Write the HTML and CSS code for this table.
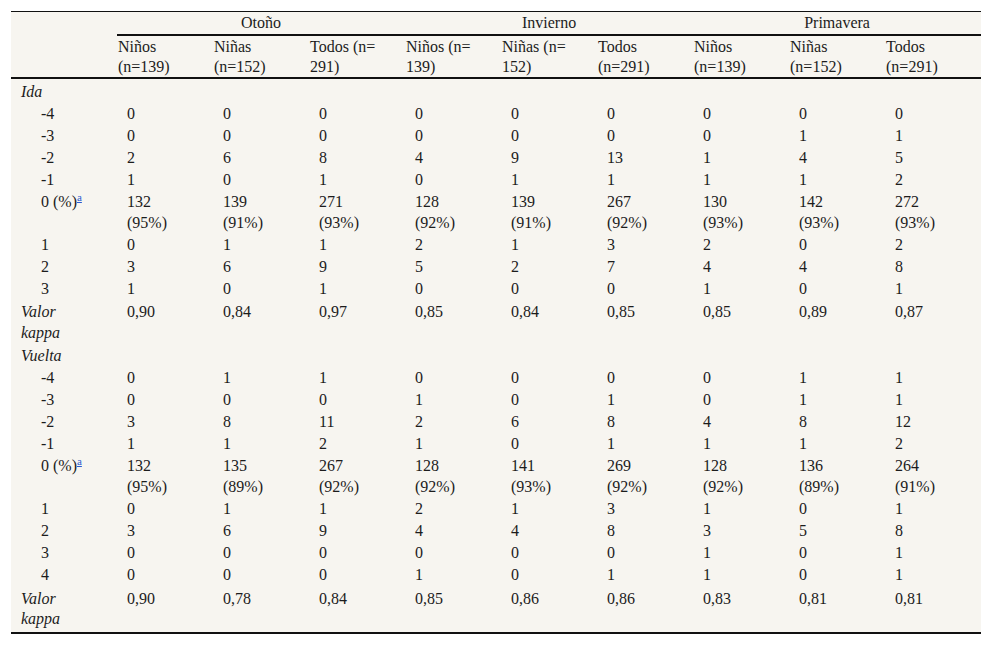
FILE: index.html
```html
<!DOCTYPE html>
<html lang="es">
<head>
<meta charset="utf-8">
<title>Tabla</title>
<link rel="stylesheet" href="styles.css">
</head>
<body>
<table class="tbl">
<colgroup>
<col class="c-label">
<col class="c-data"><col class="c-data"><col class="c-data">
<col class="c-data"><col class="c-data"><col class="c-data">
<col class="c-data"><col class="c-data"><col class="c-data">
</colgroup>
<thead>
<tr class="h1">
<th class="corner" rowspan="2"></th>
<th class="season" colspan="3">Otoño</th>
<th class="season" colspan="3">Invierno</th>
<th class="season" colspan="3">Primavera</th>
</tr>
<tr class="h2">
<th>Niños<br>(n=139)</th><th>Niñas<br>(n=152)</th><th>Todos (n=<br>291)</th>
<th>Niños (n=<br>139)</th><th>Niñas (n=<br>152)</th><th>Todos<br>(n=291)</th>
<th>Niños<br>(n=139)</th><th>Niñas<br>(n=152)</th><th>Todos<br>(n=291)</th>
</tr>
</thead>
<tbody>
<tr class="first"><td class="grp" colspan="10">Ida</td></tr>
<tr><td class="ind">-4</td><td>0</td><td>0</td><td>0</td><td>0</td><td>0</td><td>0</td><td>0</td><td>0</td><td>0</td></tr>
<tr><td class="ind">-3</td><td>0</td><td>0</td><td>0</td><td>0</td><td>0</td><td>0</td><td>0</td><td>1</td><td>1</td></tr>
<tr><td class="ind">-2</td><td>2</td><td>6</td><td>8</td><td>4</td><td>9</td><td>13</td><td>1</td><td>4</td><td>5</td></tr>
<tr><td class="ind">-1</td><td>1</td><td>0</td><td>1</td><td>0</td><td>1</td><td>1</td><td>1</td><td>1</td><td>2</td></tr>
<tr><td class="ind">0 (%)<sup class="fn"><a href="#a">a</a></sup></td><td>132<br>(95%)</td><td>139<br>(91%)</td><td>271<br>(93%)</td><td>128<br>(92%)</td><td>139<br>(91%)</td><td>267<br>(92%)</td><td>130<br>(93%)</td><td>142<br>(93%)</td><td>272<br>(93%)</td></tr>
<tr><td class="ind">1</td><td>0</td><td>1</td><td>1</td><td>2</td><td>1</td><td>3</td><td>2</td><td>0</td><td>2</td></tr>
<tr><td class="ind">2</td><td>3</td><td>6</td><td>9</td><td>5</td><td>2</td><td>7</td><td>4</td><td>4</td><td>8</td></tr>
<tr><td class="ind">3</td><td>1</td><td>0</td><td>1</td><td>0</td><td>0</td><td>0</td><td>1</td><td>0</td><td>1</td></tr>
<tr class="kappa"><td class="grp">Valor<br>kappa</td><td>0,90</td><td>0,84</td><td>0,97</td><td>0,85</td><td>0,84</td><td>0,85</td><td>0,85</td><td>0,89</td><td>0,87</td></tr>
<tr><td class="grp" colspan="10">Vuelta</td></tr>
<tr><td class="ind">-4</td><td>0</td><td>1</td><td>1</td><td>0</td><td>0</td><td>0</td><td>0</td><td>1</td><td>1</td></tr>
<tr><td class="ind">-3</td><td>0</td><td>0</td><td>0</td><td>1</td><td>0</td><td>1</td><td>0</td><td>1</td><td>1</td></tr>
<tr><td class="ind">-2</td><td>3</td><td>8</td><td>11</td><td>2</td><td>6</td><td>8</td><td>4</td><td>8</td><td>12</td></tr>
<tr><td class="ind">-1</td><td>1</td><td>1</td><td>2</td><td>1</td><td>0</td><td>1</td><td>1</td><td>1</td><td>2</td></tr>
<tr><td class="ind">0 (%)<sup class="fn"><a href="#a">a</a></sup></td><td>132<br>(95%)</td><td>135<br>(89%)</td><td>267<br>(92%)</td><td>128<br>(92%)</td><td>141<br>(93%)</td><td>269<br>(92%)</td><td>128<br>(92%)</td><td>136<br>(89%)</td><td>264<br>(91%)</td></tr>
<tr><td class="ind">1</td><td>0</td><td>1</td><td>1</td><td>2</td><td>1</td><td>3</td><td>1</td><td>0</td><td>1</td></tr>
<tr><td class="ind">2</td><td>3</td><td>6</td><td>9</td><td>4</td><td>4</td><td>8</td><td>3</td><td>5</td><td>8</td></tr>
<tr><td class="ind">3</td><td>0</td><td>0</td><td>0</td><td>0</td><td>0</td><td>0</td><td>1</td><td>0</td><td>1</td></tr>
<tr><td class="ind">4</td><td>0</td><td>0</td><td>0</td><td>1</td><td>0</td><td>1</td><td>1</td><td>0</td><td>1</td></tr>
<tr class="kappa last"><td class="grp">Valor<br>kappa</td><td>0,90</td><td>0,78</td><td>0,84</td><td>0,85</td><td>0,86</td><td>0,86</td><td>0,83</td><td>0,81</td><td>0,81</td></tr>
</tbody>
</table>
</body>
</html>
```
FILE: styles.css
```css
html, body {
  margin: 0;
  background: #ffffff;
}
body {
  padding: 11px;
  font-family: "Liberation Serif", "Times New Roman", serif;
  font-size: 16px;
  color: #1c1c1c;
}
.tbl {
  width: 970px;
  table-layout: fixed;
  border-collapse: separate;
  border-spacing: 0;
  background: #f7f5f0;
  border-top: 1px solid #111;
  border-bottom: 2px solid #111;
}
.c-label { width: 106px; }
.c-data { width: 96px; }
th, td {
  vertical-align: top;
  text-align: left;
  font-weight: normal;
  line-height: 21px;
  padding: 0.5px 0 0.5px 10px;
}
.h1 th {
  line-height: 22px;
  padding: 0;
}
.h1 .season {
  text-align: center;
  border-bottom: 2px solid #111;
}
.corner {
  border-bottom: 2px solid #111;
}
.h2 th {
  line-height: 20px;
  padding: 1px 0 0 1px;
  border-bottom: 2px solid #111;
}
.first td {
  padding-top: 1.5px;
}
.grp {
  font-style: italic;
  padding-left: 10px;
}
td.ind {
  padding-left: 30px;
}
.kappa td {
  padding-top: 3px;
  padding-bottom: 1.5px;
  line-height: 20.5px;
}
.kappa.last td {
  padding-bottom: 2px;
}
.fn {
  font-size: 11px;
  line-height: 0;
  vertical-align: 6px;
}
.fn a {
  color: #2a5bd0;
  text-decoration: underline;
}
```
